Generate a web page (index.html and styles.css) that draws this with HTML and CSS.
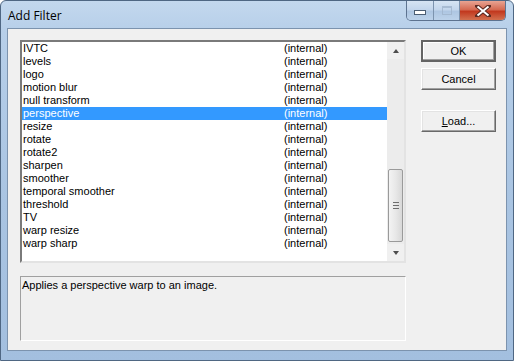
FILE: index.html
```html
<!DOCTYPE html>
<html lang="en">
<head>
    <meta charset="UTF-8">
    <title>Add Filter</title>
    <link rel="stylesheet" href="styles.css">
</head>
<body>
    <div class="window">
        <div class="titlebar">
            <span class="title">Add Filter</span>
            <div class="caption">
                <div class="cap min"><span class="min-glyph"></span></div>
                <div class="cap max"><span class="max-glyph"></span></div>
                <div class="cap close">
                    <svg width="16" height="12" viewBox="0 0 16 12">
                        <path d="M2 1 L14 11 M14 1 L2 11" stroke="#5a2a22" stroke-width="4" stroke-linecap="round"/>
                        <path d="M2.5 1.5 L13.5 10.5 M13.5 1.5 L2.5 10.5" stroke="#fff" stroke-width="2"/>
                    </svg>
                </div>
            </div>
        </div>

        <div class="client">
            <div class="left">
                <div class="listbox">
                    <div class="rows">
                        <div class="row"><span class="name">IVTC</span><span class="src">(internal)</span></div>
                        <div class="row"><span class="name">levels</span><span class="src">(internal)</span></div>
                        <div class="row"><span class="name">logo</span><span class="src">(internal)</span></div>
                        <div class="row"><span class="name">motion blur</span><span class="src">(internal)</span></div>
                        <div class="row"><span class="name">null transform</span><span class="src">(internal)</span></div>
                        <div class="row selected"><span class="name">perspective</span><span class="src">(internal)</span></div>
                        <div class="row"><span class="name">resize</span><span class="src">(internal)</span></div>
                        <div class="row"><span class="name">rotate</span><span class="src">(internal)</span></div>
                        <div class="row"><span class="name">rotate2</span><span class="src">(internal)</span></div>
                        <div class="row"><span class="name">sharpen</span><span class="src">(internal)</span></div>
                        <div class="row"><span class="name">smoother</span><span class="src">(internal)</span></div>
                        <div class="row"><span class="name">temporal smoother</span><span class="src">(internal)</span></div>
                        <div class="row"><span class="name">threshold</span><span class="src">(internal)</span></div>
                        <div class="row"><span class="name">TV</span><span class="src">(internal)</span></div>
                        <div class="row"><span class="name">warp resize</span><span class="src">(internal)</span></div>
                        <div class="row"><span class="name">warp sharp</span><span class="src">(internal)</span></div>
                    </div>
                    <div class="scrollbar">
                        <div class="arrow"><span class="tri up"></span></div>
                        <div class="track">
                            <div class="thumb"><span class="grip"></span></div>
                        </div>
                        <div class="arrow"><span class="tri down"></span></div>
                    </div>
                </div>
                <div class="desc">Applies a perspective warp to an image.</div>
            </div>

            <div class="buttons">
                <button class="btn default">OK</button>
                <button class="btn">Cancel</button>
                <button class="btn load"><u>L</u>oad...</button>
            </div>
        </div>
    </div>
</body>
</html>
```

FILE: styles.css
```css
body {
    margin: 0;
    padding: 0;
    width: 514px;
    height: 361px;
    overflow: hidden;
    font-family: "Liberation Sans", Arial, sans-serif;
    font-size: 11px;
    background: #ffffff;
}

.window {
    box-sizing: border-box;
    width: 514px;
    height: 361px;
    border: 1px solid #4f6783;
    border-radius: 6px 6px 0 0;
    background: linear-gradient(to bottom, #c3d8ee 0px, #b7cfe9 30px, #a9c4e2 200px, #a3bfdf 361px);
    padding: 0 6px 9px 6px;
    display: flex;
    flex-direction: column;
}

.titlebar {
    height: 28px;
    display: flex;
    justify-content: space-between;
    align-items: flex-start;
}

.title {
    font-family: "Open Sans", "Noto Sans", sans-serif;
    font-size: 12px;
    color: #000;
    margin: 6px 0 0 1px;
}

.caption {
    display: flex;
    margin-right: 1px;
    border: 1px solid #5d7390;
    border-top: none;
    border-radius: 0 0 5px 5px;
    overflow: hidden;
    height: 19px;
}

.cap {
    height: 19px;
    display: flex;
    align-items: center;
    justify-content: center;
    box-sizing: border-box;
}

.min, .max {
    width: 27px;
    background: linear-gradient(to bottom, #d6e4f3 0%, #c3d6ec 45%, #aec6e2 55%, #bcd2ea 100%);
    border-right: 1px solid #7c93ae;
}

.max {
    width: 26px;
}

.min-glyph {
    width: 10px;
    height: 3px;
    margin-top: 4px;
    background: #fff;
    border: 1px solid #4b5d73;
}

.max-glyph {
    width: 8px;
    height: 6px;
    border: 1px solid #a0b4cc;
    border-top-width: 2px;
    opacity: 0.8;
}

.close {
    width: 45px;
    background: linear-gradient(to bottom, #e8a493 0%, #d56a52 45%, #c2391f 55%, #d2704f 100%);
}

.client {
    flex: 1;
    background: #f0f0f0;
    border: 1px solid #7c93ae;
    display: flex;
    padding: 11px 10px 9px 12px;
    gap: 15px;
}

.left {
    width: 386px;
    display: flex;
    flex-direction: column;
    gap: 13px;
}

.listbox {
    box-sizing: border-box;
    height: 223px;
    border-style: solid;
    border-width: 2px;
    border-color: #7a7a7a #e3e3e3 #e3e3e3 #7a7a7a;
    background: #fff;
    display: flex;
}

.rows {
    flex: 1;
}

.row {
    height: 13px;
    line-height: 13px;
    display: flex;
    color: #000;
    white-space: nowrap;
}

.row.selected {
    background: #3399ff;
    color: #fff;
}

.name {
    width: 261px;
    padding-left: 1px;
}

.scrollbar {
    width: 17px;
    background: #eaeaea;
    display: flex;
    flex-direction: column;
}

.arrow {
    height: 17px;
    display: flex;
    align-items: center;
    justify-content: center;
    background: #f0f0f0;
}

.tri {
    width: 0;
    height: 0;
    border-left: 3px solid transparent;
    border-right: 3px solid transparent;
}

.tri.up {
    border-bottom: 4px solid #4d4d4d;
}

.tri.down {
    border-top: 4px solid #4d4d4d;
}

.track {
    flex: 1;
    padding-top: 110px;
    padding-bottom: 2px;
    display: flex;
    flex-direction: column;
    background: #ececec;
}

.thumb {
    box-sizing: border-box;
    height: 73px;
    margin: 0 1px;
    border: 1px solid #9a9a9a;
    border-radius: 2px;
    background: linear-gradient(to right, #f3f3f3, #e8e8e8 50%, #d8d8d8);
    display: flex;
    align-items: center;
    justify-content: center;
}

.grip {
    width: 6px;
    height: 5px;
    border-top: 1px solid #6d6d6d;
    border-bottom: 1px solid #6d6d6d;
    background: linear-gradient(to bottom, transparent 2px, #6d6d6d 2px, #6d6d6d 3px, transparent 3px);
}

.desc {
    box-sizing: border-box;
    height: 65px;
    border: 1px solid;
    border-color: #a0a0a0 #ffffff #ffffff #a0a0a0;
    padding: 2px 1px;
    color: #000;
}

.buttons {
    width: 75px;
    display: flex;
    flex-direction: column;
    gap: 6px;
}

.btn {
    box-sizing: border-box;
    width: 75px;
    height: 22px;
    padding: 0;
    font-family: "Liberation Sans", Arial, sans-serif;
    font-size: 11px;
    color: #000;
    background: #f0f0f0;
    border-style: solid;
    border-width: 1px;
    border-color: #ffffff #696969 #696969 #ffffff;
    box-shadow: inset -1px -1px 0 #a0a0a0, inset 1px 1px 0 #e3e3e3;
}

.btn.default {
    border: 2px solid;
    border-color: #646464;
    box-shadow: inset -1px -1px 0 #a0a0a0, inset 1px 1px 0 #ffffff;
}

.btn.load {
    margin-top: 14px;
}
```
